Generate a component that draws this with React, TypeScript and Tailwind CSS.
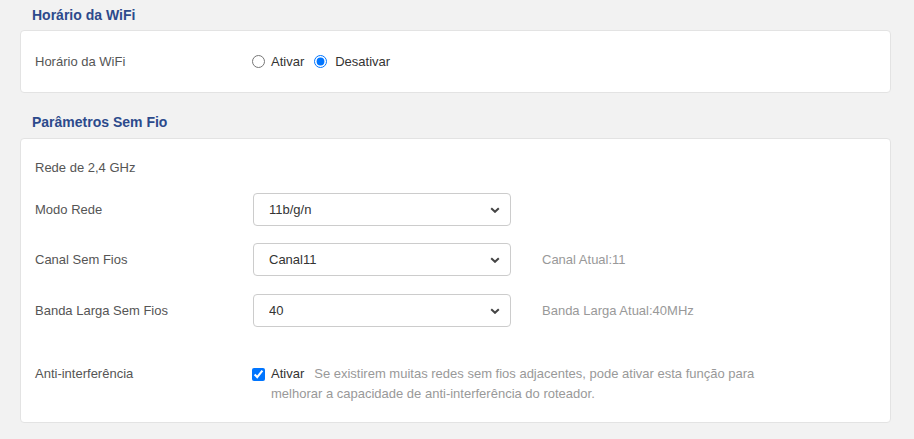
import type React from "react";

const font = { fontFamily: '"Liberation Sans", Arial, sans-serif' };

function SectionTitle({ children }: { children: React.ReactNode }) {
  return <div className="h-[30px] pl-[12px] text-[14px] font-bold leading-[30px] text-[#2c4a8c]">{children}</div>;
}

function Chevron() {
  return (
    <svg width="10" height="6" viewBox="0 0 10 6" className="pointer-events-none absolute right-[11px] top-1/2 -translate-y-1/2">
      <path d="M1.2 1.2 5 4.8 8.8 1.2" fill="none" stroke="#444" strokeWidth="2" />
    </svg>
  );
}

function SelectBox({ value, options }: { value: string; options: string[] }) {
  return (
    <div className="relative ml-[1px] w-[258px]">
      <select
        defaultValue={value}
        className="h-[33px] w-full appearance-none rounded-[4px] border border-[#cccccc] bg-white pl-[15px] text-[13px] text-[#333] outline-none"
        style={font}
      >
        {options.map((o) => (
          <option key={o}>{o}</option>
        ))}
      </select>
      <Chevron />
    </div>
  );
}

function Row({ label, children, className = "" }: { label: string; children: React.ReactNode; className?: string }) {
  return (
    <div className={`flex items-center ${className}`}>
      <div className="w-[217px] shrink-0 text-[13px] text-[#555]">{label}</div>
      {children}
    </div>
  );
}

export default function App() {
  return (
    <div className="min-h-[439px] bg-[#f2f2f2] pl-[20px] pr-[23px]" style={font}>
      <SectionTitle>Horário da WiFi</SectionTitle>
      <div className="flex h-[63px] items-center rounded-[4px] border border-[#e3e3e3] bg-white px-[14px]">
        <Row label="Horário da WiFi">
          <label className="flex items-center gap-[6px] text-[13px] text-[#333]">
            <input type="radio" name="sched" className="m-0 h-[13px] w-[13px] accent-[#0075ff]" />
            Ativar
          </label>
          <label className="ml-[10px] flex items-center gap-[8px] text-[13px] text-[#333]">
            <input type="radio" name="sched" defaultChecked className="m-0 h-[13px] w-[13px] accent-[#0075ff]" />
            Desativar
          </label>
        </Row>
      </div>

      <div className="mt-[14px]">
        <SectionTitle>Parâmetros Sem Fio</SectionTitle>
      </div>
      <div className="mt-[1px] rounded-[4px] border border-[#e3e3e3] bg-white px-[14px] pb-[18px] pt-[19px]">
        <div className="h-[20px] text-[13px] leading-[20px] text-[#555]">Rede de 2,4 GHz</div>
        <Row label="Modo Rede" className="mt-[15px]">
          <SelectBox value="11b/g/n" options={["11b/g/n", "11b/g", "11b"]} />
        </Row>
        <Row label="Canal Sem Fios" className="mt-[17px]">
          <SelectBox value="Canal11" options={["Auto", "Canal1", "Canal6", "Canal11"]} />
          <span className="ml-[31px] text-[13px] text-[#999]">Canal Atual:11</span>
        </Row>
        <Row label="Banda Larga Sem Fios" className="mt-[18px]">
          <SelectBox value="40" options={["20", "40", "20/40"]} />
          <span className="ml-[31px] text-[13px] text-[#999]">Banda Larga Atual:40MHz</span>
        </Row>
        <div className="mt-[37px] flex items-start">
          <div className="w-[217px] shrink-0 text-[13px] leading-[20px] text-[#555]">Anti-interferência</div>
          <input type="checkbox" defaultChecked className="m-0 mt-[4px] h-[13px] w-[13px] shrink-0 accent-[#0075ff]" />
          <p className="ml-[6px] w-[490px] text-[13px] leading-[20px] text-[#999]">
            <span className="mr-[10px] text-[#333]">Ativar</span>
            Se existirem muitas redes sem fios adjacentes, pode ativar esta função para melhorar a capacidade de anti-interferência do roteador.
          </p>
        </div>
      </div>
    </div>
  );
}
